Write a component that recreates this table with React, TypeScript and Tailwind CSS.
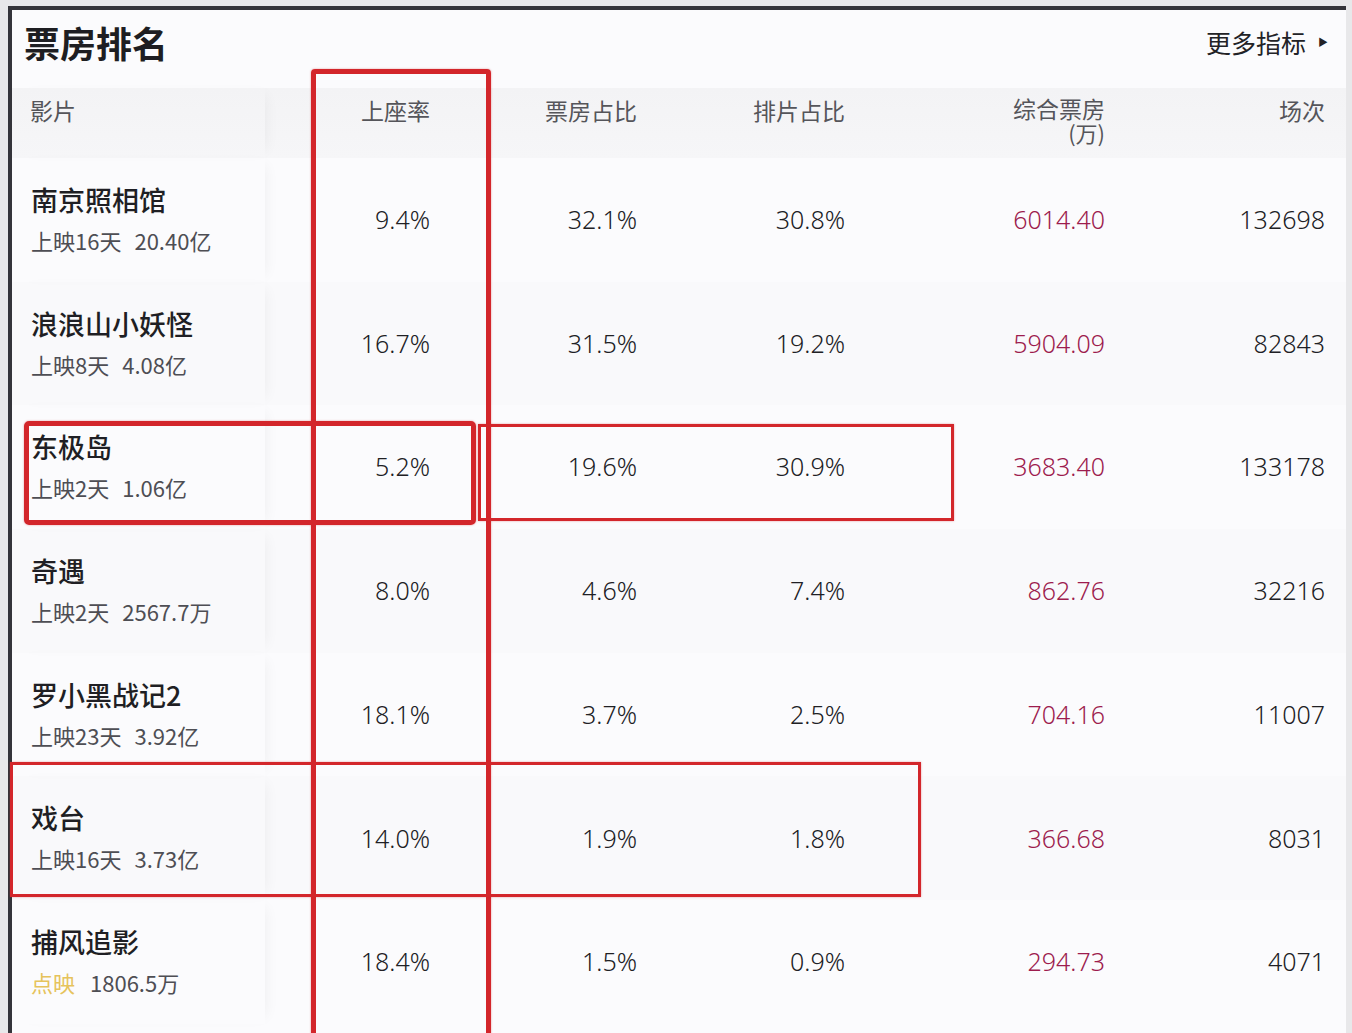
import React from "react";

type Row = {
  name: string;
  tag: string;
  gold?: boolean;
  total: string;
  seat: string;
  box: string;
  sched: string;
  money: string;
  shows: string;
};

const rows: Row[] = [
  { name: "南京照相馆", tag: "上映16天", total: "20.40亿", seat: "9.4%", box: "32.1%", sched: "30.8%", money: "6014.40", shows: "132698" },
  { name: "浪浪山小妖怪", tag: "上映8天", total: "4.08亿", seat: "16.7%", box: "31.5%", sched: "19.2%", money: "5904.09", shows: "82843" },
  { name: "东极岛", tag: "上映2天", total: "1.06亿", seat: "5.2%", box: "19.6%", sched: "30.9%", money: "3683.40", shows: "133178" },
  { name: "奇遇", tag: "上映2天", total: "2567.7万", seat: "8.0%", box: "4.6%", sched: "7.4%", money: "862.76", shows: "32216" },
  { name: "罗小黑战记2", tag: "上映23天", total: "3.92亿", seat: "18.1%", box: "3.7%", sched: "2.5%", money: "704.16", shows: "11007" },
  { name: "戏台", tag: "上映16天", total: "3.73亿", seat: "14.0%", box: "1.9%", sched: "1.8%", money: "366.68", shows: "8031" },
  { name: "捕风追影", tag: "点映", gold: true, total: "1806.5万", seat: "18.4%", box: "1.5%", sched: "0.9%", money: "294.73", shows: "4071" },
];

const grid = "grid grid-cols-[253px_165px_207px_208px_260px_220px]";
const num = "flex items-center justify-end text-[25px] font-['Noto_Sans',sans-serif] font-light";

export default function App() {
  return (
    <div className="relative w-[1352px] h-[1033px] overflow-hidden bg-[#e8e8ea] font-['Noto_Sans_CJK_SC','Noto_Sans',sans-serif]">
      <div className="ml-[8px] mt-[6px] w-[1338px] h-[1040px] border-l-[4px] border-t-[4px] border-[#34343a] bg-[#fbfbfd]">
        {/* title row */}
        <div className="h-[78px] flex items-start justify-between pl-[12px] pr-[18px] pt-[12px]">
          <div className="text-[36px] leading-[40px] font-bold text-[#1e1e22]">票房排名</div>
          <div className="flex items-center gap-[12px] pt-[2px]">
            <span className="text-[25px] leading-[36px] text-[#222226]">更多指标</span>
            <span className="text-[10px] leading-[36px] text-[#222226]">▶</span>
          </div>
        </div>

        {/* header band */}
        <div className={`${grid} h-[70px] bg-gradient-to-b from-[#f3f3f5] to-[#f6f6f8] text-[23px] leading-[24px] text-[#55555a]`}>
          <div className="pl-[18px] pt-[10px] shadow-[8px_0_14px_-8px_rgba(0,0,0,0.06)]">影片</div>
          <div className="pt-[10px] text-right">上座率</div>
          <div className="pt-[10px] text-right">票房占比</div>
          <div className="pt-[10px] text-right">排片占比</div>
          <div className="pt-[9px] flex flex-col items-end">
            <div className="leading-[22px]">综合票房</div>
            <div className="leading-[22px] mt-[2px] text-[22px]">(万)</div>
          </div>
          <div className="pt-[10px] text-right">场次</div>
        </div>

        {/* rows */}
        {rows.map((r, i) => (
          <div
            key={r.name}
            className={`${grid} h-[123.7px] ${i % 2 === 0 ? "bg-[#fbfbfd]" : "bg-[#f9f9fb]"}`}
          >
            <div className="pl-[19px] pt-[26px] shadow-[8px_0_14px_-8px_rgba(0,0,0,0.06)]">
              <div className="text-[27px] leading-[32px] font-medium text-[#1f1f24]">{r.name}</div>
              <div className="mt-[11px] text-[22px] leading-[26px] text-[#4e4e54] flex">
                <span className={r.gold ? "text-[#e6c35c]" : ""}>{r.tag}</span>
                <span className={r.gold ? "ml-[15px]" : "ml-[13px]"}>{r.total}</span>
              </div>
            </div>
            <div className={`${num} text-[#202024]`}>{r.seat}</div>
            <div className={`${num} text-[#202024]`}>{r.box}</div>
            <div className={`${num} text-[#202024]`}>{r.sched}</div>
            <div className={`${num} text-[#9d1c4e]`}>{r.money}</div>
            <div className={`${num} text-[#202024]`}>{r.shows}</div>
          </div>
        ))}
      </div>

      {/* red annotation boxes */}
      <div className="absolute left-[311px] top-[69px] w-[180px] h-[1010px] border-[5px] border-[#d3262b] rounded-[4px] shadow-[0_0_2px_rgba(211,38,43,0.5)]" />
      <div className="absolute left-[24px] top-[421px] w-[452px] h-[104px] border-[5px] border-[#d3262b] rounded-[5px] shadow-[0_0_2px_rgba(211,38,43,0.5)]" />
      <div className="absolute left-[478px] top-[424px] w-[476px] h-[97px] border-[3px] border-[#d3262b] shadow-[0_0_2px_rgba(211,38,43,0.4)]" />
      <div className="absolute left-[10px] top-[762px] w-[911px] h-[135px] border-[3px] border-[#d3262b] shadow-[0_0_2px_rgba(211,38,43,0.4)]" />
    </div>
  );
}
